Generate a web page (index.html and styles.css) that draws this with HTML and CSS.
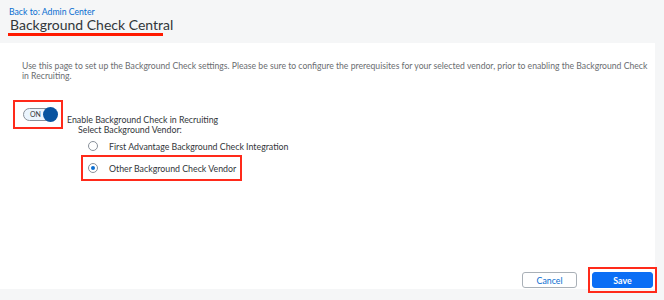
FILE: index.html
```html
<!DOCTYPE html>
<html lang="en">
<head>
    <meta charset="UTF-8">
    <meta name="viewport" content="width=device-width, initial-scale=1.0">
    <title>Background Check Central</title>
    <link rel="stylesheet" href="styles.css">
</head>
<body>
    <div class="page-header">
        <a class="back-link" href="#">Back to: Admin Center</a>
        <h1 class="page-title">Background Check Central</h1>
        <div class="title-mark"></div>
    </div>

    <div class="panel">
        <p class="intro">Use this page to set up the Background Check settings. Please be sure to configure the prerequisites for your selected vendor, prior to enabling the Background Check in Recruiting.</p>

        <div class="setting-row">
            <div class="mark-box toggle-box">
                <span class="switch">
                    <span class="switch-text">ON</span>
                    <span class="switch-knob"></span>
                </span>
            </div>
            <div class="setting-text">
                <div class="setting-label">Enable Background Check in Recruiting</div>
                <div class="vendor-label">Select Background Vendor:</div>
            </div>
        </div>

        <div class="vendor-list">
            <label class="radio-row">
                <span class="radio"></span>
                <span>First Advantage Background Check Integration</span>
            </label>
            <label class="radio-row mark-box">
                <span class="radio checked"></span>
                <span>Other Background Check Vendor</span>
            </label>
        </div>

        <div class="actions">
            <button class="btn btn-ghost">Cancel</button>
            <div class="mark-box save-box">
                <button class="btn btn-primary">Save</button>
            </div>
        </div>
    </div>
</body>
</html>
```

FILE: styles.css
```css
body {
    margin: 0;
    background-color: #f5f6f7;
    font-family: 'Lato', 'Noto Sans', sans-serif;
    color: #32363a;
    width: 664px;
    height: 300px;
    overflow: hidden;
}
.page-header {
    height: 43px;
    padding: 6px 0 0 9px;
    box-sizing: border-box;
}
.back-link {
    display: block;
    font-size: 8.7px;
    line-height: 11px;
    color: #0a6ed1;
    text-decoration: none;
}
.page-title {
    margin: 0;
    font-size: 14px;
    font-weight: normal;
    line-height: 16px;
    color: #32363a;
    padding-left: 1px;
}
.title-mark {
    width: 155px;
    height: 3px;
    margin: 0 0 0 -1px;
    background-color: #ff1a00;
}
.panel {
    background-color: #fff;
    margin-right: 9px;
    height: 246px;
    box-sizing: border-box;
    padding: 18px 0 0 22px;
    position: relative;
}
.intro {
    margin: 0;
    font-size: 8.65px;
    line-height: 10px;
    color: #6a6d70;
}
.setting-row {
    display: flex;
    align-items: flex-start;
    margin: 19px 0 0 -9px;
}
.mark-box {
    border: 2px solid #ff2a1a;
    box-sizing: border-box;
}
.toggle-box {
    width: 50px;
    height: 29px;
    display: flex;
    align-items: center;
    padding-left: 8px;
}
.switch {
    position: relative;
    display: inline-block;
    width: 33px;
    height: 13px;
    border: 1px solid #89919a;
    border-radius: 8px;
    background-color: #ebf5fe;
    box-sizing: border-box;
}
.switch-text {
    position: absolute;
    left: 6px;
    top: 0;
    font-size: 7px;
    line-height: 11px;
    color: #32363a;
}
.switch-knob {
    position: absolute;
    right: -3px;
    top: -2px;
    width: 15px;
    height: 15px;
    border-radius: 50%;
    background-color: #0854a0;
}
.setting-text {
    margin: 15px 0 0 4px;
    font-size: 8.8px;
    line-height: 10px;
}
.vendor-label {
    padding-left: 11px;
}
.vendor-list {
    margin: 2px 0 0 61px;
    font-size: 8.8px;
    color: #32363a;
}
.radio-row {
    display: flex;
    align-items: center;
    gap: 11px;
    height: 18px;
    padding-left: 5px;
}
.radio-row.mark-box {
    width: 161px;
    height: 26px;
    margin-left: -2px;
    padding-left: 5px;
}
.radio {
    width: 10px;
    height: 10px;
    border: 1px solid #89919a;
    border-radius: 50%;
    box-sizing: border-box;
    display: flex;
    align-items: center;
    justify-content: center;
}
.radio.checked::after {
    content: "";
    width: 4px;
    height: 4px;
    border-radius: 50%;
    background-color: #0a6ed1;
}
.actions {
    position: absolute;
    right: -2px;
    bottom: -4px;
    display: flex;
    align-items: center;
    gap: 11px;
}
.btn {
    font-family: 'Lato', 'Noto Sans', sans-serif;
    font-size: 8.8px;
    height: 16px;
    border-radius: 3px;
    padding: 0;
    cursor: pointer;
}
.btn-ghost {
    width: 55px;
    background-color: #fff;
    border: 1px solid #a9b0b7;
    color: #0a6ed1;
}
.save-box {
    width: 69px;
    height: 26px;
    display: flex;
    align-items: center;
    justify-content: center;
}
.btn-primary {
    width: 61px;
    background-color: #0a6ef5;
    border: 1px solid #0a6ef5;
    color: #fff;
    font-weight: bold;
}
```
